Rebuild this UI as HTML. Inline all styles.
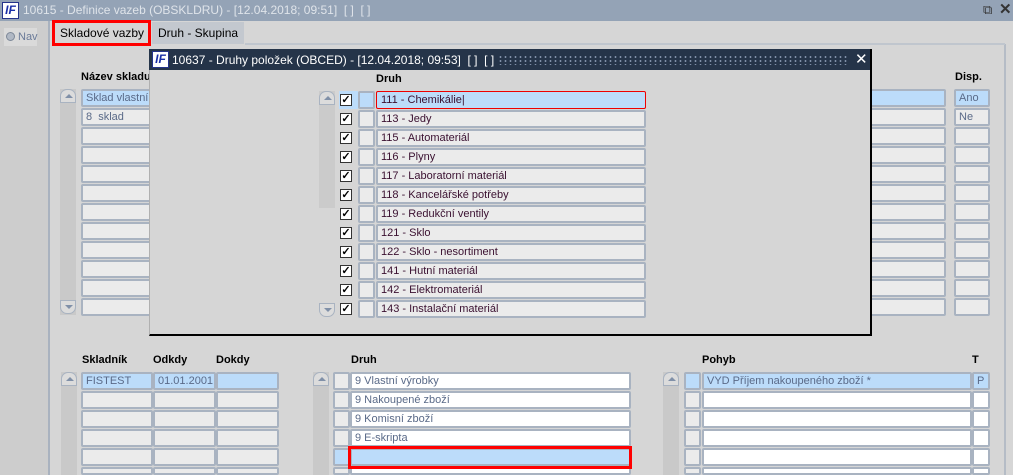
<!DOCTYPE html>
<html style="overflow:hidden;width:1013px;height:475px"><head><meta charset="utf-8"><style>
*{margin:0;padding:0;box-sizing:border-box}
body{width:1013px;height:475px;overflow:hidden;background:#d6d6d6;font-family:"Liberation Sans",sans-serif;font-size:11px;position:relative;color:#000}
.a{position:absolute}
.f{position:absolute;height:18px;border:2px solid #a9b3c1;border-radius:2px;background:#ebebeb;padding-left:3px;line-height:14px;color:#5a6a88;white-space:nowrap;overflow:hidden}
.b{background:#bcdcfa}
.w{background:#fff}
.h{position:absolute;font-weight:bold;font-size:11px}
.sb{position:absolute;width:16px;background:#c9c9c9}
.up,.dn{position:absolute;left:0;width:16px;height:14px;border:1px solid #a9b3c1;background:#dcdcdc;border-radius:7px 7px 0 0}
.dn{border-radius:0 0 7px 7px}
.up:after{content:"";position:absolute;left:4px;top:4px;border:4px solid transparent;border-bottom:4px solid #8090a8;border-top:0}
.dn:after{content:"";position:absolute;left:4px;top:4px;border:4px solid transparent;border-top:4px solid #8090a8;border-bottom:0}
.cb{position:absolute;width:12px;height:12px;border:1px solid #333;background:#fff;font-size:11px;line-height:10px;text-align:center;font-weight:bold}
.m{color:#3a1030;line-height:14px}
</style></head><body>
<div class="a" style="left:0;top:0;width:1013px;height:21px;background:#94a3b6"></div>
<div class="a" style="left:2px;top:2px;width:17px;height:17px;background:#fff;border:1px solid #24338a;color:#1a2fa8;font-weight:bold;font-style:italic;font-size:12px;line-height:15px;text-align:center">IF</div>
<div class="a" style="left:23px;top:3px;color:#dfe4ea;font-size:12px">10615 - Definice vazeb (OBSKLDRU) - [12.04.2018; 09:51]&nbsp; [ ]&nbsp; [ ]</div>
<div class="a" style="left:983px;top:2px;color:#333;font-size:13px">⧉</div>
<div class="a" style="left:999px;top:0px;color:#333;font-size:15px;font-weight:bold">✕</div>
<div class="a" style="left:0;top:21px;width:50px;height:454px;background:#cdcdcd;border-right:2px solid #a9b2bf"></div>
<div class="a" style="left:4px;top:28px;width:33px;height:18px;background:#dadada;color:#6a7a98;line-height:18px;padding-left:14px">Nav</div>
<div class="a" style="left:6px;top:32px;width:9px;height:9px;border-radius:50%;background:#b0b8c4;border:1px solid #7d8898"></div>
<div class="a" style="left:152px;top:22px;width:92px;height:22px;background:#c3c8cf;line-height:22px;padding-left:6px;font-size:12px">Druh - Skupina</div>
<div class="a" style="left:52px;top:20px;width:99px;height:26px;background:#d6d6d6;border:3px solid #f00;line-height:20px;padding-left:5px;font-size:12px">Skladové vazby</div>
<div class="a" style="left:1004px;top:44px;width:2px;height:431px;background:#b5bcc6"></div>
<div class="a" style="left:245px;top:43px;width:760px;height:2px;background:#c0c6ce"></div>
<div class="h" style="left:81px;top:71px">Název skladu</div>
<div class="h" style="left:955px;top:71px">Disp.</div>
<div class="sb" style="left:60px;top:89px;height:226px"><div class="up" style="top:0"></div><div class="dn" style="top:211px"></div></div>
<div class="f b" style="left:81px;top:89px;width:70px">Sklad vlastní</div>
<div class="f" style="left:81px;top:108px;width:70px">8&nbsp; sklad</div>
<div class="f" style="left:81px;top:127px;width:70px"></div>
<div class="f" style="left:81px;top:146px;width:70px"></div>
<div class="f" style="left:81px;top:165px;width:70px"></div>
<div class="f" style="left:81px;top:184px;width:70px"></div>
<div class="f" style="left:81px;top:203px;width:70px"></div>
<div class="f" style="left:81px;top:222px;width:70px"></div>
<div class="f" style="left:81px;top:241px;width:70px"></div>
<div class="f" style="left:81px;top:260px;width:70px"></div>
<div class="f" style="left:81px;top:279px;width:70px"></div>
<div class="f" style="left:81px;top:298px;width:70px"></div>
<div class="f b" style="left:860px;top:89px;width:86px"></div>
<div class="f" style="left:860px;top:108px;width:86px"></div>
<div class="f" style="left:860px;top:127px;width:86px"></div>
<div class="f" style="left:860px;top:146px;width:86px"></div>
<div class="f" style="left:860px;top:165px;width:86px"></div>
<div class="f" style="left:860px;top:184px;width:86px"></div>
<div class="f" style="left:860px;top:203px;width:86px"></div>
<div class="f" style="left:860px;top:222px;width:86px"></div>
<div class="f" style="left:860px;top:241px;width:86px"></div>
<div class="f" style="left:860px;top:260px;width:86px"></div>
<div class="f" style="left:860px;top:279px;width:86px"></div>
<div class="f" style="left:860px;top:298px;width:86px"></div>
<div class="f b" style="left:954px;top:89px;width:36px">Ano</div>
<div class="f" style="left:954px;top:108px;width:36px">Ne</div>
<div class="f" style="left:954px;top:127px;width:36px"></div>
<div class="f" style="left:954px;top:146px;width:36px"></div>
<div class="f" style="left:954px;top:165px;width:36px"></div>
<div class="f" style="left:954px;top:184px;width:36px"></div>
<div class="f" style="left:954px;top:203px;width:36px"></div>
<div class="f" style="left:954px;top:222px;width:36px"></div>
<div class="f" style="left:954px;top:241px;width:36px"></div>
<div class="f" style="left:954px;top:260px;width:36px"></div>
<div class="f" style="left:954px;top:279px;width:36px"></div>
<div class="f" style="left:954px;top:298px;width:36px"></div>
<div class="a" style="left:149px;top:49px;width:723px;height:287px;background:#d6d6d6;border-right:2px solid #000;border-bottom:2px solid #000;border-left:1px solid #b0b0b0"></div>
<div class="a" style="left:149px;top:49px;width:721px;height:21px;background:#253449"></div>
<div class="a" style="left:152px;top:51px;width:17px;height:17px;background:#fff;border:1px solid #24338a;color:#1a2fa8;font-weight:bold;font-style:italic;font-size:12px;line-height:15px;text-align:center">IF</div>
<div class="a" style="left:172px;top:53px;color:#fff;font-size:12px">10637 - Druhy položek (OBCED) - [12.04.2018; 09:53]&nbsp; [ ]&nbsp; [ ]</div>
<div class="a" style="left:498px;top:55px;width:350px;height:10px;background-image:radial-gradient(#8090a8 1px,transparent 1.2px);background-size:5px 4px"></div>
<div class="a" style="left:855px;top:50px;color:#fff;font-size:15px">✕</div>
<div class="h" style="left:376px;top:73px">Druh</div>
<div class="sb" style="left:319px;top:91px;height:117px;background:#cbcbcb"><div class="up" style="top:0"></div></div>
<div class="sb" style="left:319px;top:300px;height:18px;background:transparent"><div class="dn" style="top:3px"></div></div>
<div class="a" style="left:339px;top:91px;width:19px;height:18px;background:#bcdcfa"></div>
<div class="cb" style="left:340px;top:94px">✓</div><div class="cb" style="left:340px;top:113px">✓</div><div class="cb" style="left:340px;top:132px">✓</div><div class="cb" style="left:340px;top:151px">✓</div><div class="cb" style="left:340px;top:170px">✓</div><div class="cb" style="left:340px;top:189px">✓</div><div class="cb" style="left:340px;top:208px">✓</div><div class="cb" style="left:340px;top:227px">✓</div><div class="cb" style="left:340px;top:246px">✓</div><div class="cb" style="left:340px;top:265px">✓</div><div class="cb" style="left:340px;top:284px">✓</div><div class="cb" style="left:340px;top:303px">✓</div>
<div class="f b" style="left:358px;top:91px;width:17px"></div>
<div class="f" style="left:358px;top:110px;width:17px"></div><div class="f" style="left:358px;top:129px;width:17px"></div><div class="f" style="left:358px;top:148px;width:17px"></div><div class="f" style="left:358px;top:167px;width:17px"></div><div class="f" style="left:358px;top:186px;width:17px"></div><div class="f" style="left:358px;top:205px;width:17px"></div><div class="f" style="left:358px;top:224px;width:17px"></div><div class="f" style="left:358px;top:243px;width:17px"></div><div class="f" style="left:358px;top:262px;width:17px"></div><div class="f" style="left:358px;top:281px;width:17px"></div><div class="f" style="left:358px;top:300px;width:17px"></div>
<div class="f b m" style="left:376px;top:91px;width:270px;border:1px solid #e00;padding-left:4px;line-height:16px">111 - Chemikálie|</div>
<div class="f m" style="left:376px;top:110px;width:270px">113 - Jedy</div>
<div class="f m" style="left:376px;top:129px;width:270px">115 - Automateriál</div>
<div class="f m" style="left:376px;top:148px;width:270px">116 - Plyny</div>
<div class="f m" style="left:376px;top:167px;width:270px">117 - Laboratorní materiál</div>
<div class="f m" style="left:376px;top:186px;width:270px">118 - Kancelářské potřeby</div>
<div class="f m" style="left:376px;top:205px;width:270px">119 - Redukční ventily</div>
<div class="f m" style="left:376px;top:224px;width:270px">121 - Sklo</div>
<div class="f m" style="left:376px;top:243px;width:270px">122 - Sklo - nesortiment</div>
<div class="f m" style="left:376px;top:262px;width:270px">141 - Hutní materiál</div>
<div class="f m" style="left:376px;top:281px;width:270px">142 - Elektromateriál</div>
<div class="f m" style="left:376px;top:300px;width:270px">143 - Instalační materiál</div>
<div class="h" style="left:82px;top:354px">Skladník</div>
<div class="h" style="left:153px;top:354px">Odkdy</div>
<div class="h" style="left:216px;top:354px">Dokdy</div>
<div class="h" style="left:351px;top:354px">Druh</div>
<div class="h" style="left:702px;top:354px">Pohyb</div>
<div class="h" style="left:972px;top:354px">T</div>
<div class="sb" style="left:61px;top:372px;height:103px"><div class="up" style="top:0"></div></div>
<div class="sb" style="left:313px;top:372px;height:103px"><div class="up" style="top:0"></div></div>
<div class="sb" style="left:663px;top:372px;height:103px"><div class="up" style="top:0"></div></div>
<div class="f b" style="left:81px;top:372px;width:72px">FISTEST</div><div class="f b" style="left:153px;top:372px;width:63px">01.01.2001</div><div class="f b" style="left:216px;top:372px;width:63px"></div>
<div class="f" style="left:81px;top:391px;width:72px"></div><div class="f" style="left:153px;top:391px;width:63px"></div><div class="f" style="left:216px;top:391px;width:63px"></div>
<div class="f" style="left:81px;top:410px;width:72px"></div><div class="f" style="left:153px;top:410px;width:63px"></div><div class="f" style="left:216px;top:410px;width:63px"></div>
<div class="f" style="left:81px;top:429px;width:72px"></div><div class="f" style="left:153px;top:429px;width:63px"></div><div class="f" style="left:216px;top:429px;width:63px"></div>
<div class="f" style="left:81px;top:448px;width:72px"></div><div class="f" style="left:153px;top:448px;width:63px"></div><div class="f" style="left:216px;top:448px;width:63px"></div>
<div class="f" style="left:81px;top:467px;width:72px;height:8px"></div><div class="f" style="left:153px;top:467px;width:63px;height:8px"></div><div class="f" style="left:216px;top:467px;width:63px;height:8px"></div>
<div class="f" style="left:333px;top:372px;width:17px"></div><div class="f" style="left:333px;top:391px;width:17px"></div><div class="f" style="left:333px;top:410px;width:17px"></div><div class="f" style="left:333px;top:429px;width:17px"></div><div class="f b" style="left:333px;top:448px;width:17px"></div><div class="f" style="left:333px;top:467px;width:17px;height:8px"></div>
<div class="f w" style="left:350px;top:372px;width:281px">9 Vlastní výrobky</div>
<div class="f w" style="left:350px;top:391px;width:281px">9 Nakoupené zboží</div>
<div class="f w" style="left:350px;top:410px;width:281px">9 Komisní zboží</div>
<div class="f w" style="left:350px;top:429px;width:281px">9 E-skripta</div>
<div class="f b" style="left:350px;top:448px;width:281px"></div>
<div class="f w" style="left:350px;top:467px;width:281px;height:8px"></div>
<div class="a" style="left:348px;top:446px;width:284px;height:23px;border:3px solid #f00"></div>
<div class="f b" style="left:684px;top:372px;width:17px"></div><div class="f" style="left:684px;top:391px;width:17px"></div><div class="f" style="left:684px;top:410px;width:17px"></div><div class="f" style="left:684px;top:429px;width:17px"></div><div class="f" style="left:684px;top:448px;width:17px"></div><div class="f" style="left:684px;top:467px;width:17px;height:8px"></div>
<div class="f b" style="left:702px;top:372px;width:270px">VYD Příjem nakoupeného zboží *</div>
<div class="f w" style="left:702px;top:391px;width:270px"></div><div class="f w" style="left:702px;top:410px;width:270px"></div><div class="f w" style="left:702px;top:429px;width:270px"></div><div class="f w" style="left:702px;top:448px;width:270px"></div><div class="f w" style="left:702px;top:467px;width:270px;height:8px"></div>
<div class="f b" style="left:972px;top:372px;width:18px">P</div>
<div class="f w" style="left:972px;top:391px;width:18px"></div><div class="f w" style="left:972px;top:410px;width:18px"></div><div class="f w" style="left:972px;top:429px;width:18px"></div><div class="f w" style="left:972px;top:448px;width:18px"></div><div class="f w" style="left:972px;top:467px;width:18px;height:8px"></div>
</body></html>
